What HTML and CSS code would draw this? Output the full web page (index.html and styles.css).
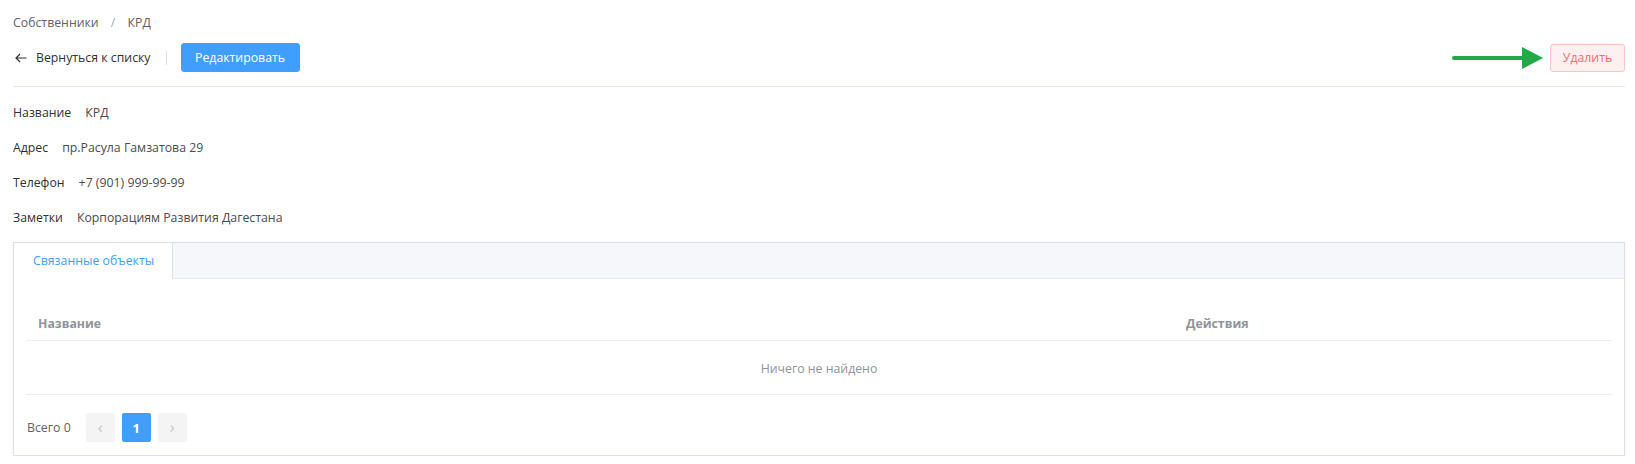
FILE: index.html
```html
<!DOCTYPE html>
<html lang="ru">
<head>
<meta charset="utf-8" />
<title>КРД — Собственники</title>
<link rel="stylesheet" href="styles.css">
</head>
<body>

<div id="main">
  <div class="breadcrumb">
    <span class="crumb">Собственники</span>
    <span class="crumb-sep">/</span>
    <span class="crumb">КРД</span>
  </div>

  <div class="toolbar">
    <a class="back-link" href="#">
      <svg class="back-icon" width="12" height="10" viewBox="0 0 12 10">
        <path d="M11.5 5H1M5 1L1 5l4 4" fill="none" stroke="#303133" stroke-width="1.2" />
      </svg>
      <span>Вернуться к списку</span>
    </a>
    <span class="divider"></span>
    <button class="btn btn-primary">Редактировать</button>

    <div class="toolbar-right">
      <svg class="hint-arrow" width="92" height="22" viewBox="0 0 92 22">
        <path d="M2 11H72" stroke="#22a847" stroke-width="4" stroke-linecap="round" />
        <path d="M70 0L91 11L70 22Z" fill="#22a847" />
      </svg>
      <button class="btn btn-danger">Удалить</button>
    </div>
  </div>

  <div class="info">
    <div class="info-row"><span class="info-label">Название</span><span class="info-value">КРД</span></div>
    <div class="info-row"><span class="info-label">Адрес</span><span class="info-value">пр.Расула Гамзатова 29</span></div>
    <div class="info-row"><span class="info-label">Телефон</span><span class="info-value">+7 (901) 999-99-99</span></div>
    <div class="info-row"><span class="info-label">Заметки</span><span class="info-value">Корпорациям Развития Дагестана</span></div>
  </div>

  <div class="tabs-card">
    <div class="tabs-header">
      <div class="tab tab-active">Связанные объекты</div>
    </div>
    <div class="tabs-content">
      <div class="table">
        <div class="table-row table-head">
          <div class="cell">Название</div>
          <div class="cell">Действия</div>
        </div>
        <div class="table-empty">Ничего не найдено</div>
      </div>

      <div class="pager">
        <span class="pager-total">Всего 0</span>
        <button class="pager-btn pager-arrow" disabled>&lsaquo;</button>
        <button class="pager-btn pager-active">1</button>
        <button class="pager-btn pager-arrow" disabled>&rsaquo;</button>
      </div>
    </div>
  </div>
</div>

</body>
</html>
```

FILE: styles.css
```css
body, html {
  margin: 0;
  padding: 0;
  background: #fff;
  color: #303133;
  font-family: "Open Sans", "Noto Sans", Arial, sans-serif;
  font-size: 12.3px;
}
#main {
  padding: 0 10px 0 13px;
}

/* breadcrumb */
.breadcrumb {
  padding-top: 14px;
  line-height: 18px;
  color: #606266;
}
.crumb-sep {
  margin: 0 9px;
  color: #a8abb2;
}

/* toolbar */
.toolbar {
  display: flex;
  align-items: center;
  margin-top: 11px;
  padding-bottom: 14px;
  border-bottom: 1px solid #e4e7ed;
}
.back-link {
  display: flex;
  align-items: center;
  color: #303133;
  text-decoration: none;
  padding-left: 2px;
}
.back-icon {
  margin-right: 9px;
}
.divider {
  width: 1px;
  height: 14px;
  background: #dcdfe6;
  margin: 0 14px 0 15px;
}
.btn {
  font-family: inherit;
  font-size: 12.3px;
  height: 29px;
  padding: 0 15px;
  border-radius: 3px;
  border: 1px solid transparent;
  cursor: pointer;
}
.btn-primary {
  background: #409eff;
  border-color: #409eff;
  color: #fff;
  width: 119px;
  padding: 0;
}
.btn-danger {
  background: #fef0f0;
  border-color: #fbc4c4;
  color: #f56c6c;
  height: 28px;
  width: 75px;
  padding: 0;
}
.toolbar-right {
  margin-left: auto;
  display: flex;
  align-items: center;
}
.hint-arrow {
  margin-right: 6px;
}

/* info */
.info {
  padding-top: 8px;
}
.info-row {
  display: flex;
  gap: 14px;
  height: 35px;
  line-height: 35px;
}
.info-label {
  color: #303133;
}
.info-value {
  color: #4a4c50;
}

/* tabs card */
.tabs-card {
  margin-top: 7px;
  border: 1px solid #dcdfe6;
  box-shadow: 0 1px 3px rgba(0, 0, 0, 0.06);
}
.tabs-header {
  display: flex;
  height: 35px;
  background: #f5f7fa;
  border-bottom: 1px solid #e4e7ed;
}
.tab {
  padding: 0 18px 0 19px;
  line-height: 35px;
  color: #909399;
}
.tab-active {
  background: #fff;
  color: #409eff;
  border-right: 1px solid #dcdfe6;
  height: 36px;
}
.tabs-content {
  padding: 13px 12px 13px 12px;
}

/* table */
.table {
  margin-top: 15px;
}
.table-row {
  display: grid;
  grid-template-columns: 1fr 438px;
  border-bottom: 1px solid #ebeef5;
}
.table-head .cell {
  height: 33px;
  line-height: 33px;
  padding: 0 12px;
  font-weight: 700;
  color: #909399;
}
.table-empty {
  height: 53px;
  line-height: 56px;
  text-align: center;
  color: #909399;
  border-bottom: 1px solid #ebeef5;
}

/* pager */
.pager {
  display: flex;
  align-items: center;
  gap: 7px;
  margin-top: 18px;
  height: 29px;
}
.pager-total {
  color: #606266;
  margin-left: 1px;
  margin-right: 8px;
}
.pager-btn {
  width: 29px;
  height: 29px;
  border: 0;
  border-radius: 2px;
  background: #f4f4f5;
  color: #c0c4cc;
  font-family: inherit;
  font-size: 13px;
  padding: 0;
}
.pager-arrow {
  font-size: 16px;
  line-height: 29px;
}
.pager-active {
  background: #409eff;
  color: #fff;
  font-weight: 700;
}
```
